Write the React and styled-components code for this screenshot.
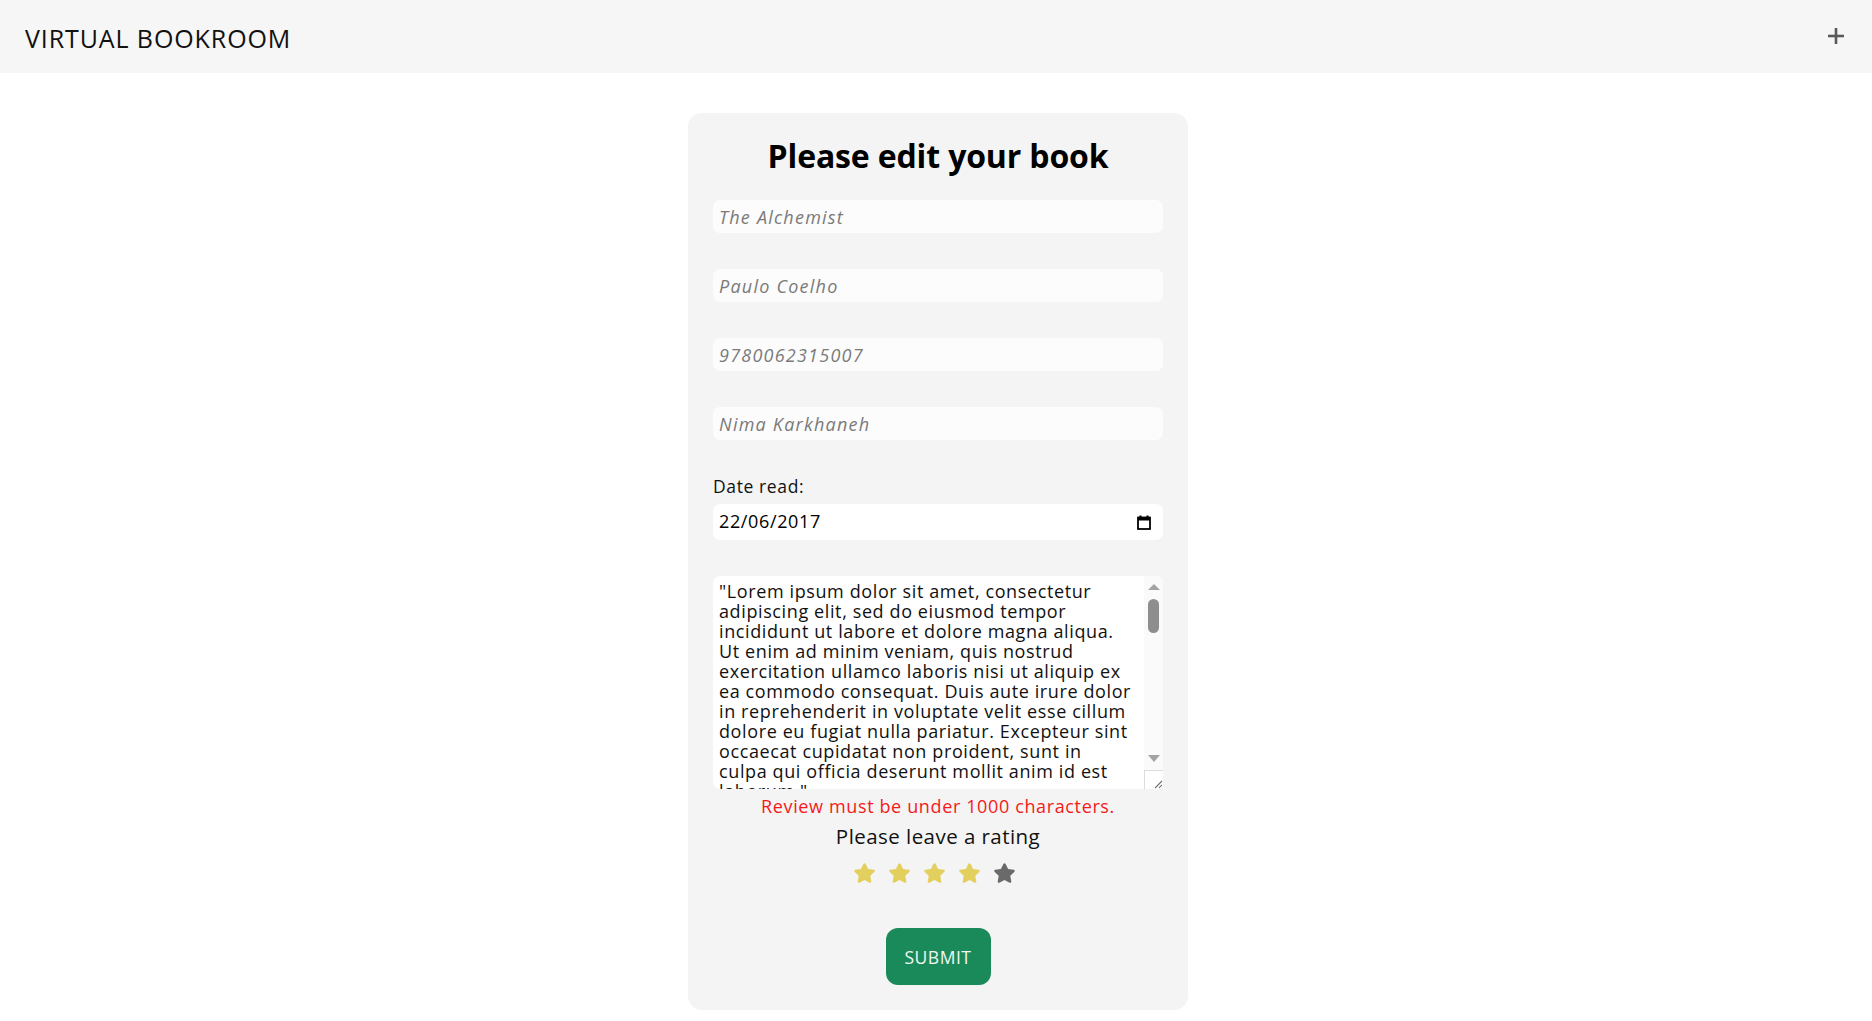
import React from "react";
import styled, { createGlobalStyle } from "styled-components";

const GlobalStyle = createGlobalStyle`
  html, body {
    margin: 0;
    padding: 0;
    background: #ffffff;
  }
  body {
    font-family: "Open Sans", "Liberation Sans", sans-serif;
    color: #111;
  }
  * { box-sizing: border-box; }
`;

const Page = styled.div`
  display: flex;
  flex-direction: column;
`;

const Header = styled.header`
  height: 73px;
  background: #f6f6f6;
  display: flex;
  align-items: center;
  justify-content: space-between;
  padding: 0 28px 0 25px;
`;

const Brand = styled.div`
  font-size: 25px;
  font-weight: 400;
  letter-spacing: 0.036em;
  color: #111;
  margin-top: 2px;
`;

const AddButton = styled.button`
  border: none;
  background: transparent;
  padding: 0;
  width: 16px;
  height: 16px;
  display: flex;
  align-items: center;
  justify-content: center;
  margin-top: -2px;
  cursor: pointer;
`;

const Main = styled.main`
  display: flex;
  justify-content: center;
  padding: 40px 0 10px 4px;
`;

const Card = styled.form`
  width: 500px;
  background: #f4f4f4;
  border-radius: 14px;
  padding: 23px 25px 25px;
  display: flex;
  flex-direction: column;
`;

const Title = styled.h1`
  margin: 0 0 24px;
  font-size: 32px;
  line-height: 40px;
  font-weight: 700;
  text-align: center;
  color: #000;
  letter-spacing: -0.15px;
`;

const TextInput = styled.input`
  height: 33px;
  width: 100%;
  border: none;
  outline: none;
  border-radius: 7px;
  background: #fcfcfc;
  padding: 0 6px;
  font-family: inherit;
  font-size: 18px;
  letter-spacing: 0.068em;
  margin-bottom: ${(p) => (p.$last ? "34px" : "36px")};
  &::placeholder {
    color: #7a7a7a;
    font-style: italic;
  }
`;

const Label = styled.label`
  font-size: 17.5px;
  line-height: 24px;
  letter-spacing: 0.035em;
  color: #111;
  margin-bottom: 6px;
`;

const DateField = styled.div`
  height: 36px;
  background: #ffffff;
  border-radius: 7px;
  display: flex;
  align-items: center;
  padding: 0 12px 0 6px;
  margin-bottom: 36px;
`;

const DateText = styled.input`
  flex: 1;
  border: none;
  outline: none;
  background: transparent;
  padding: 0;
  margin-top: -2px;
  font-family: inherit;
  font-size: 18px;
  letter-spacing: 0.035em;
  color: #000;
`;

const ReviewBox = styled.div`
  height: 213px;
  display: flex;
  background: #ffffff;
  border-radius: 7px;
  overflow: hidden;
`;

const Review = styled.textarea`
  flex: 1;
  min-width: 0;
  height: 100%;
  border: none;
  outline: none;
  background: transparent;
  padding: 5px 0 5px 6px;
  font-family: inherit;
  font-size: 18px;
  line-height: 20px;
  letter-spacing: 0.034em;
  color: #111;
  resize: none;
  overflow: hidden;
`;

const ScrollRail = styled.div`
  width: 19px;
  background: #fafafa;
  display: flex;
  flex-direction: column;
  align-items: center;
  padding-top: 8px;
`;

const Arrow = styled.div`
  width: 0;
  height: 0;
  border-left: 6.5px solid transparent;
  border-right: 6.5px solid transparent;
  ${(p) =>
    p.$down
      ? "border-top: 7px solid #a3a3a3;"
      : "border-bottom: 6px solid #a3a3a3;"}
`;

const Thumb = styled.div`
  width: 11px;
  height: 34px;
  margin-top: 9px;
  border-radius: 6px;
  background: #8e8e8e;
`;

const RailSpacer = styled.div`
  flex: 1;
`;

const ResizeCorner = styled.div`
  width: 19px;
  height: 19px;
  margin-top: 8px;
  background: #ffffff;
  border-top: 1px solid #dcdcdc;
  border-left: 1px solid #dcdcdc;
  display: flex;
  align-items: flex-end;
  justify-content: flex-end;
`;

const ErrorText = styled.p`
  margin: 5px 0 0;
  text-align: center;
  font-size: 18px;
  line-height: 24px;
  letter-spacing: 0.035em;
  color: #f41a1a;
`;

const RatingLabel = styled.p`
  margin: 4px 0 0;
  text-align: center;
  font-size: 20.5px;
  line-height: 28px;
  letter-spacing: 0.022em;
  color: #111;
`;

const Stars = styled.div`
  display: flex;
  justify-content: center;
  gap: 12px;
  margin-top: 11px;
  padding-right: 7px;
`;

const StarBtn = styled.span`
  width: 23px;
  height: 23px;
  display: flex;
  align-items: center;
  justify-content: center;
  color: ${(p) => (p.$on ? "#e3cf5e" : "#6a6a6a")};
`;

const Submit = styled.button`
  align-self: center;
  margin-top: 44px;
  width: 105px;
  height: 57px;
  border: none;
  border-radius: 12px;
  background: #1b8a5a;
  color: #eef8f2;
  font-family: inherit;
  font-size: 17.5px;
  letter-spacing: 0.03em;
  cursor: pointer;
`;

const Star = () => (
  <svg width="23" height="22" viewBox="0 0 24 23" fill="currentColor">
    <path d="M12 1.2c.45 0 .85.26 1.05.66l2.7 5.47 6.03.88c.44.06.8.37.94.79.14.42.03.88-.29 1.19l-4.370 4.26 1.03 6.01c.08.44-.1.88-.46 1.14-.36.26-.83.29-1.23.08L12 18.84l-5.4 2.84c-.39.21-.87.18-1.23-.08-.36-.26-.54-.7-.46-1.14l1.03-6.01L1.57 10.2c-.32-.31-.43-.77-.29-1.19.14-.42.5-.73.94-.79l6.03-.88 2.7-5.47c.2-.4.6-.66 1.05-.66z" />
  </svg>
);

const PlusIcon = () => (
  <svg width="16" height="16" viewBox="0 0 16 16" fill="#5a5a5a">
    <rect x="6.7" y="0" width="2.6" height="16" />
    <rect x="0" y="6.7" width="16" height="2.6" />
  </svg>
);

const CalendarIcon = () => (
  <svg width="14" height="15" viewBox="0 0 14 15" fill="none">
    <rect x="2.5" y="0.5" width="2" height="3" fill="#000" />
    <rect x="9.5" y="0.5" width="2" height="3" fill="#000" />
    <rect x="1" y="2.5" width="12" height="11.5" stroke="#000" strokeWidth="1.8" fill="none" />
    <rect x="1" y="2.5" width="12" height="3" fill="#000" />
  </svg>
);

const GripIcon = () => (
  <svg width="10" height="10" viewBox="0 0 10 10" stroke="#6f6f6f" strokeWidth="1.1">
    <line x1="9" y1="2" x2="2" y2="9" />
    <line x1="9" y1="6" x2="6" y2="9" />
  </svg>
);

const lorem =
  '"Lorem ipsum dolor sit amet, consectetur\nadipiscing elit, sed do eiusmod tempor\nincididunt ut labore et dolore magna aliqua.\nUt enim ad minim veniam, quis nostrud\nexercitation ullamco laboris nisi ut aliquip ex\nea commodo consequat. Duis aute irure dolor\nin reprehenderit in voluptate velit esse cillum\ndolore eu fugiat nulla pariatur. Excepteur sint\noccaecat cupidatat non proident, sunt in\nculpa qui officia deserunt mollit anim id est\nlaborum."';

const loremFlat =
  '"Lorem ipsum dolor sit amet, consectetur adipiscing elit, sed do eiusmod tempor incididunt ut labore et dolore magna aliqua. Ut enim ad minim veniam, quis nostrud exercitation ullamco laboris nisi ut aliquip ex ea commodo consequat. Duis aute irure dolor in reprehenderit in voluptate velit esse cillum dolore eu fugiat nulla pariatur. Excepteur sint occaecat cupidatat non proident, sunt in culpa qui officia deserunt mollit anim id est laborum."';

const reviewText = [lorem, loremFlat, loremFlat, loremFlat, loremFlat].join("\n\n");

export default function App() {
  const rating = 4;
  return (
    <Page>
      <GlobalStyle />
      <Header>
        <Brand>VIRTUAL BOOKROOM</Brand>
        <AddButton type="button" aria-label="Add book">
          <PlusIcon />
        </AddButton>
      </Header>
      <Main>
        <Card onSubmit={(e) => e.preventDefault()}>
          <Title>Please edit your book</Title>
          <TextInput placeholder="The Alchemist" />
          <TextInput placeholder="Paulo Coelho" />
          <TextInput placeholder="9780062315007" />
          <TextInput placeholder="Nima Karkhaneh" $last />
          <Label htmlFor="date-read">Date read:</Label>
          <DateField>
            <DateText id="date-read" defaultValue="22/06/2017" />
            <CalendarIcon />
          </DateField>
          <ReviewBox>
            <Review defaultValue={reviewText} />
            <ScrollRail aria-hidden="true">
              <Arrow />
              <Thumb />
              <RailSpacer />
              <Arrow $down />
              <ResizeCorner>
                <GripIcon />
              </ResizeCorner>
            </ScrollRail>
          </ReviewBox>
          <ErrorText>Review must be under 1000 characters.</ErrorText>
          <RatingLabel>Please leave a rating</RatingLabel>
          <Stars>
            {[1, 2, 3, 4, 5].map((n) => (
              <StarBtn key={n} $on={n <= rating}>
                <Star />
              </StarBtn>
            ))}
          </Stars>
          <Submit type="submit">SUBMIT</Submit>
        </Card>
      </Main>
    </Page>
  );
}
